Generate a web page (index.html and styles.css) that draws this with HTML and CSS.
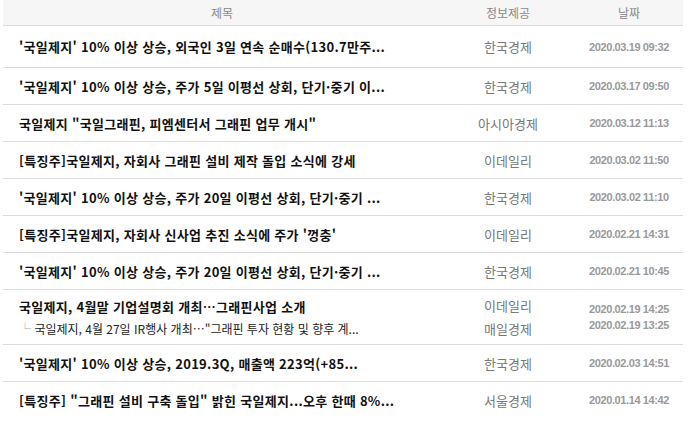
FILE: index.html
```html
<!DOCTYPE html>
<html lang="ko">
<head>
    <meta charset="UTF-8">
    <title>뉴스</title>
    <link rel="stylesheet" href="styles.css">
</head>
<body>
    <table class="news">
        <thead>
            <tr>
                <th class="col-title">제목</th>
                <th class="col-src">정보제공</th>
                <th class="col-date">날짜</th>
            </tr>
        </thead>
        <tbody>
            <tr class="first">
                <td class="title">'국일제지' 10% 이상 상승, 외국인 3일 연속 순매수(130.7만주...</td>
                <td class="src">한국경제</td>
                <td class="date">2020.03.19 09:32</td>
            </tr>
            <tr>
                <td class="title">'국일제지' 10% 이상 상승, 주가 5일 이평선 상회, 단기·중기 이...</td>
                <td class="src">한국경제</td>
                <td class="date">2020.03.17 09:50</td>
            </tr>
            <tr>
                <td class="title">국일제지 "국일그래핀, 피엠센터서 그래핀 업무 개시"</td>
                <td class="src">아시아경제</td>
                <td class="date">2020.03.12 11:13</td>
            </tr>
            <tr>
                <td class="title">[특징주]국일제지, 자회사 그래핀 설비 제작 돌입 소식에 강세</td>
                <td class="src">이데일리</td>
                <td class="date">2020.03.02 11:50</td>
            </tr>
            <tr>
                <td class="title">'국일제지' 10% 이상 상승, 주가 20일 이평선 상회, 단기·중기 ...</td>
                <td class="src">한국경제</td>
                <td class="date">2020.03.02 11:10</td>
            </tr>
            <tr>
                <td class="title">[특징주]국일제지, 자회사 신사업 추진 소식에 주가 '껑충'</td>
                <td class="src">이데일리</td>
                <td class="date">2020.02.21 14:31</td>
            </tr>
            <tr>
                <td class="title">'국일제지' 10% 이상 상승, 주가 20일 이평선 상회, 단기·중기 ...</td>
                <td class="src">한국경제</td>
                <td class="date">2020.02.21 10:45</td>
            </tr>
            <tr class="grouped">
                <td class="title">
                    <div>국일제지, 4월말 기업설명회 개최…그래핀사업 소개</div>
                    <div class="related"><span class="mark">└</span> 국일제지, 4월 27일 IR행사 개최…"그래핀 투자 현황 및 향후 계...</div>
                </td>
                <td class="src">
                    <div>이데일리</div>
                    <div class="related">매일경제</div>
                </td>
                <td class="date">
                    <div>2020.02.19 14:25</div>
                    <div class="related">2020.02.19 13:25</div>
                </td>
            </tr>
            <tr>
                <td class="title">'국일제지' 10% 이상 상승, 2019.3Q, 매출액 223억(+85...</td>
                <td class="src">한국경제</td>
                <td class="date">2020.02.03 14:51</td>
            </tr>
            <tr class="last">
                <td class="title">[특징주] "그래핀 설비 구축 돌입" 밝힌 국일제지...오후 한때 8%...</td>
                <td class="src">서울경제</td>
                <td class="date">2020.01.14 14:42</td>
            </tr>
        </tbody>
    </table>
</body>
</html>
```

FILE: styles.css
```css
body {
    margin: 0;
    padding: 0 9px 0 3px;
    background: #ffffff;
    font-family: "Noto Sans CJK KR", "Noto Sans", sans-serif;
}
.news {
    width: 680px;
    border-collapse: collapse;
    table-layout: fixed;
}
.news th {
    height: 25px;
    padding: 0;
    background: #f6f6f6;
    border-bottom: 1px solid #dcdcdc;
    color: #888888;
    font-size: 12px;
    font-weight: normal;
    text-align: center;
}
.col-title {
    width: 438px;
}
.col-src {
    width: 134px;
}
.news td {
    height: 36px;
    padding: 0;
    border-bottom: 1px solid #dcdcdc;
    white-space: nowrap;
    overflow: hidden;
}
.news tr.first td {
    height: 41px;
}
.news tr.last td {
    border-bottom: none;
}
.news tr.grouped td {
    height: 54px;
}
.title {
    padding-left: 16px !important;
    color: #111111;
    font-size: 13px;
    font-weight: bold;
    letter-spacing: 0.3px;
}
.src {
    text-align: center;
    color: #777777;
    font-size: 13px;
}
.date {
    text-align: center;
    color: #999999;
    font-family: "Liberation Sans", Arial, sans-serif;
    font-size: 11px;
    font-weight: bold;
    letter-spacing: -0.4px;
}
.related {
    margin-top: 4px;
}
.title .related,
.src .related {
    font-weight: normal;
}
.title .related {
    color: #222222;
    font-size: 12px;
    letter-spacing: 0;
}
.mark {
    color: #aaaaaa;
}
```
